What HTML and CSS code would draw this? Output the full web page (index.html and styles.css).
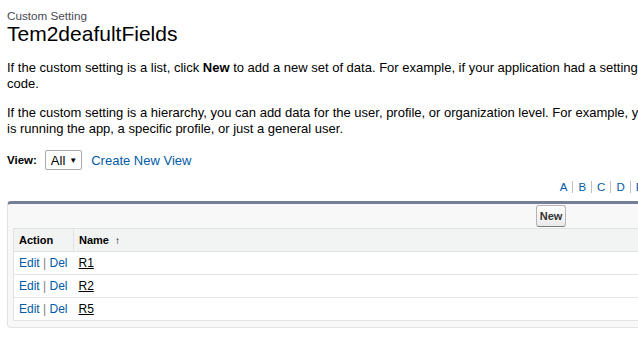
FILE: index.html
```html
<!DOCTYPE html>
<html>
<head>
<meta charset="utf-8">
<link rel="stylesheet" href="styles.css">
</head>
<body>
<div class="page">
  <div class="ptitle">
    <div class="ptype">Custom Setting</div>
    <h1 class="pdesc">Tem2deafultFields</h1>
  </div>
  <div class="intro">
    <p>If the custom setting is a list, click <b>New</b> to add a new set of data. For example, if your application had a setting for country codes, each set might include the country's name and dialing<br>code.</p>
    <p>If the custom setting is a hierarchy, you can add data for the user, profile, or organization level. For example, you may want a setting to have one value when a specific user<br>is running the app, a specific profile, or just a general user.</p>
  </div>
  <div class="viewbar">
    <span class="viewlabel">View:</span>
    <span class="selectbox">All <span class="caret">&#9660;</span></span>
    <a class="link" href="#">Create New View</a>
  </div>
  <div class="rolodex">
    <a href="#">A</a><a href="#">B</a><a href="#">C</a><a href="#">D</a><a href="#">E</a><a href="#">F</a><a href="#">G</a><a href="#">H</a><a href="#">I</a><a href="#">J</a><a href="#">K</a><a href="#">L</a><a href="#">M</a><a href="#">N</a><a href="#">O</a><a href="#">P</a><a href="#">Q</a><a href="#">R</a><a href="#">S</a><a href="#">T</a><a href="#">U</a><a href="#">V</a><a href="#">W</a><a href="#">X</a><a href="#">Y</a><a href="#">Z</a><a href="#">Other</a><a href="#" class="last">All</a>
  </div>
  <div class="listbox">
    <div class="btnrow"><button class="btn">New</button></div>
    <table class="list">
      <thead>
        <tr><th class="col-action">Action</th><th>Name <span class="sort">&#8593;</span></th></tr>
      </thead>
      <tbody>
        <tr><td><a class="link" href="#">Edit</a> <span class="sep">|</span> <a class="link" href="#">Del</a></td><td><a class="rec" href="#">R1</a></td></tr>
        <tr><td><a class="link" href="#">Edit</a> <span class="sep">|</span> <a class="link" href="#">Del</a></td><td><a class="rec" href="#">R2</a></td></tr>
        <tr><td><a class="link" href="#">Edit</a> <span class="sep">|</span> <a class="link" href="#">Del</a></td><td><a class="rec" href="#">R5</a></td></tr>
      </tbody>
    </table>
  </div>
</div>
</body>
</html>
```

FILE: styles.css
```css
html, body {
  margin: 0;
  padding: 0;
  background: #fff;
}
body {
  font-family: "Liberation Sans", Arial, sans-serif;
  font-size: 12px;
  color: #000;
  overflow: hidden;
}
.page {
  width: 1088px;
  padding: 9px 7px 0;
}
.ptype {
  font-size: 11.7px;
  line-height: 13px;
  color: #4a4a56;
}
.pdesc {
  margin: 0;
  font-size: 21px;
  font-weight: normal;
  line-height: 24px;
}
.intro {
  margin-top: 14px;
}
.intro p {
  margin: 0 0 13px;
  font-size: 13px;
  line-height: 16px;
  white-space: nowrap;
  color: #000;
}
.viewbar {
  display: flex;
  align-items: center;
  margin-top: 12px;
  height: 20px;
}
.viewlabel {
  font-weight: bold;
  font-size: 11.5px;
  margin-right: 8px;
}
.selectbox {
  display: inline-flex;
  align-items: center;
  height: 18px;
  padding: 0 4px 0 5px;
  border: 1px solid #a9a9a9;
  border-radius: 2px;
  font-size: 13px;
  margin-right: 9px;
}
.caret {
  font-size: 8px;
  margin-left: 4px;
}
.link {
  color: #015ba7;
  text-decoration: none;
}
.viewbar .link {
  font-size: 13px;
}
.rolodex {
  display: flex;
  justify-content: flex-end;
  margin-top: 10px;
  margin-right: -6px;
  height: 14px;
  font-size: 11.5px;
  line-height: 14px;
}
.rolodex a {
  color: #015ba7;
  text-decoration: none;
  padding: 0 5px;
  border-right: 1px solid #c0c0c0;
  line-height: 12px;
  height: 12px;
  margin-top: 1px;
}
.rolodex a.last {
  border-right: none;
  padding-right: 0;
}
.listbox {
  margin-top: 7px;
  background: #f8f8f8;
  border: 1px solid #e0e3e5;
  border-top: 3px solid #747e96;
  border-radius: 4px;
  padding: 0 5px 6px;
}
.btnrow {
  display: flex;
  justify-content: center;
  padding: 1px 0 1px;
}
.btn {
  font-family: "Liberation Sans", Arial, sans-serif;
  font-size: 11px;
  font-weight: bold;
  color: #333;
  height: 22px;
  padding: 0 3px;
  border: 1px solid #b5b5b5;
  border-bottom-color: #7f7f7f;
  border-radius: 3px;
  background: linear-gradient(#ffffff, #f4f4f4 60%, #e9e9e9);
}
.list {
  width: 100%;
  border-collapse: collapse;
  background: #fff;
  border: 1px solid #e0e3e5;
}
.list th {
  text-align: left;
  font-size: 11px;
  font-weight: bold;
  background: #f2f3f3;
  height: 22px;
  padding: 0 5px;
  border-bottom: 1px solid #e0e3e5;
  color: #000;
}
.list th.col-action {
  width: 49px;
  border-right: 1px solid #e0e3e5;
}
.sort {
  font-weight: normal;
  font-size: 10px;
  margin-left: 3px;
}
.list td {
  height: 22px;
  padding: 0 5px;
  border-bottom: 1px solid #e3e3e3;
  font-size: 12px;
}
.list tr:last-child td {
  border-bottom: none;
}
.sep {
  color: #7f7f7f;
}
.rec {
  color: #000;
  text-decoration: underline;
}
```
